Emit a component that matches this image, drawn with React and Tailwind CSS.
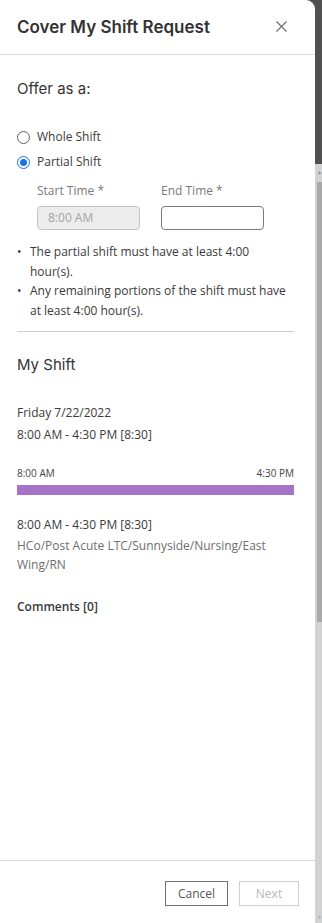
import React from "react";
import { X } from "lucide-react";

const Radio = ({ checked, label }) => (
  <label className="flex items-center gap-[7px] h-[20px]">
    {checked ? (
      <span className="w-[13px] h-[13px] rounded-full border-[1.5px] border-[#1a73e8] flex items-center justify-center">
        <span className="w-[7px] h-[7px] rounded-full bg-[#1a73e8]" />
      </span>
    ) : (
      <span className="w-[13px] h-[13px] rounded-full border border-[#5f5f5f]" />
    )}
    <span className="text-[12px] text-[#3a3a3a]">{label}</span>
  </label>
);

const App = () => {
  return (
    <div
      className="flex w-[322px] h-[923px] bg-[#505050] overflow-hidden"
      style={{ fontFamily: '"Open Sans", "Noto Sans", sans-serif' }}
    >
      <div className="w-[315px] h-full bg-white rounded-tr-[9px] flex flex-col">
        <div className="h-[55px] border-b border-[#dcdcdc] flex items-start justify-between pl-[17px] pr-[24px] pt-[14px] shrink-0">
          <h1
            className="text-[17px] leading-[26px] font-semibold text-[#333]"
            style={{ fontFamily: "Inter, sans-serif" }}
          >
            Cover My Shift Request
          </h1>
          <X className="w-[19px] h-[19px] mt-[3px] text-[#6b6b6b]" strokeWidth={1.4} />
        </div>

        <div className="flex-1 px-[17px] pr-[21px]">
          <p
            className="mt-[24px] text-[15px] leading-[20px] text-[#333]"
            style={{ fontFamily: "Inter, sans-serif" }}
          >
            Offer as a:
          </p>

          <div className="mt-[28px] flex flex-col gap-[5px]">
            <Radio label="Whole Shift" />
            <Radio checked label="Partial Shift" />
          </div>

          <div className="mt-[9px] ml-[20px] flex gap-[21px]">
            <div className="w-[103px]">
              <p className="text-[12px] leading-[20px] text-[#7a7a7a]">Start Time *</p>
              <div className="mt-[5px] h-[24px] rounded-[4px] border border-[#c4c4c4] bg-[#ececec] px-[10px] flex items-center text-[12px] text-[#a3a3a3]">
                8:00 AM
              </div>
            </div>
            <div className="w-[103px]">
              <p className="text-[12px] leading-[20px] text-[#7a7a7a]">End Time *</p>
              <div className="mt-[5px] h-[24px] rounded-[4px] border border-[#7a7a7a] bg-white" />
            </div>
          </div>

          <ul className="mt-[12px] text-[12px] leading-[19.5px] text-[#3a3a3a] flex flex-col">
            <li className="flex">
              <span className="w-[13px] shrink-0">•</span>
              <span>The partial shift must have at least 4:00 hour(s).</span>
            </li>
            <li className="flex">
              <span className="w-[13px] shrink-0">•</span>
              <span>Any remaining portions of the shift must have at least 4:00 hour(s).</span>
            </li>
          </ul>

          <div className="mt-[11px] border-t border-[#cfcfcf]" />

          <p
            className="mt-[23px] text-[15px] leading-[20px] text-[#333]"
            style={{ fontFamily: "Inter, sans-serif" }}
          >
            My Shift
          </p>

          <div className="mt-[28px] text-[12px] text-[#3a3a3a]">
            <p className="leading-[20px]">Friday 7/22/2022</p>
            <p className="mt-[2px] leading-[20px]">8:00 AM - 4:30 PM [8:30]</p>
          </div>

          <div className="mt-[21px] flex justify-between text-[10px] leading-[14px] text-[#444]">
            <span>8:00 AM</span>
            <span>4:30 PM</span>
          </div>
          <div className="mt-[5px] h-[10px] bg-[#a673c8]" />

          <div className="mt-[20px] text-[12px] leading-[20px]">
            <p className="text-[#3a3a3a]">8:00 AM - 4:30 PM [8:30]</p>
            <p className="mt-[1px] text-[#6e6e6e] leading-[19px] pr-[6px]">
              HCo/Post Acute LTC/Sunnyside/Nursing/East Wing/RN
            </p>
          </div>

          <p className="mt-[23px] text-[12px] leading-[20px] font-semibold text-[#3a3a3a]">
            Comments [0]
          </p>
        </div>

        <div className="h-[63px] border-t border-[#dcdcdc] flex items-start justify-end gap-[11px] pt-[20px] pr-[16px] shrink-0">
          <button className="w-[63px] h-[25px] border border-[#6f6f6f] text-[12px] text-[#555]">
            Cancel
          </button>
          <button className="w-[60px] h-[25px] border border-[#cfcfcf] text-[12px] text-[#b8b8b8]">
            Next
          </button>
        </div>
      </div>

      <div className="w-[7px] h-full flex flex-col">
        <div className="h-[164px] bg-[#505050]" />
        <div className="flex-1 bg-[#d2d2d2] flex flex-col pl-[2px]">
          <div className="h-[18px] flex items-center justify-center text-[5px] text-[#888]">▲</div>
          <div className="h-[440px] bg-[#a9a9a9]" />
          <div className="flex-1" />
          <div className="h-[10px] flex items-center justify-center text-[5px] text-[#aaa]">▼</div>
        </div>
      </div>
    </div>
  );
};

export default App;
